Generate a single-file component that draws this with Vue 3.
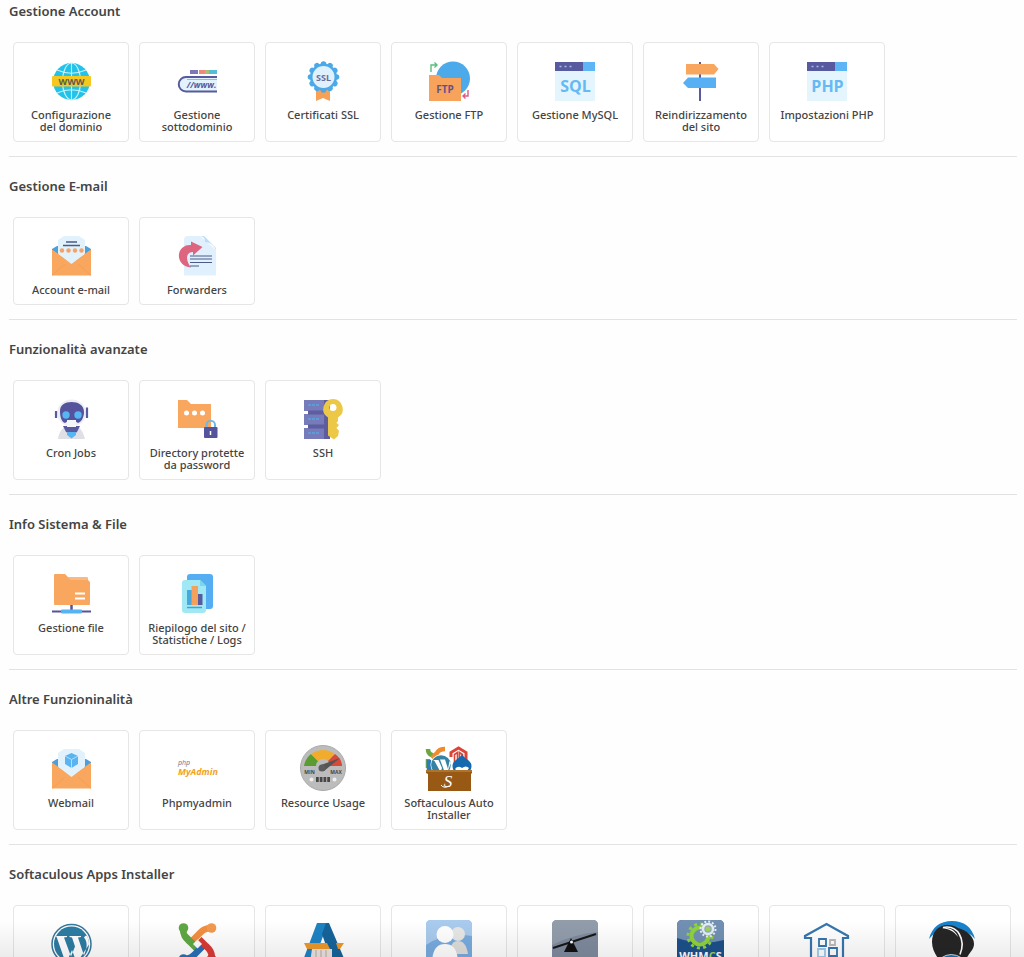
<script setup>
const sections = [
  {
    title: 'Gestione Account',
    tiles: [
      { icon: 'www', label: 'Configurazione\ndel dominio' },
      { icon: 'subdomain', label: 'Gestione\nsottodominio' },
      { icon: 'ssl', label: 'Certificati SSL' },
      { icon: 'ftp', label: 'Gestione FTP' },
      { icon: 'window', code: 'SQL', label: 'Gestione MySQL' },
      { icon: 'sign', label: 'Reindirizzamento\ndel sito' },
      { icon: 'window', code: 'PHP', label: 'Impostazioni PHP' }
    ]
  },
  {
    title: 'Gestione E-mail',
    tiles: [
      { icon: 'mail', label: 'Account e-mail' },
      { icon: 'forward', label: 'Forwarders' }
    ]
  },
  {
    title: 'Funzionalità avanzate',
    tiles: [
      { icon: 'robot', label: 'Cron Jobs' },
      { icon: 'lock', label: 'Directory protette\nda password' },
      { icon: 'key', label: 'SSH' }
    ]
  },
  {
    title: 'Info Sistema & File',
    tiles: [
      { icon: 'files', label: 'Gestione file' },
      { icon: 'report', label: 'Riepilogo del sito /\nStatistiche / Logs' }
    ]
  },
  {
    title: 'Altre Funzioninalità',
    tiles: [
      { icon: 'webmail', label: 'Webmail' },
      { icon: 'pma', label: 'Phpmyadmin' },
      { icon: 'gauge', label: 'Resource Usage' },
      { icon: 'softaculous', label: 'Softaculous Auto\nInstaller' }
    ]
  },
  {
    title: 'Softaculous Apps Installer',
    tiles: [
      { icon: 'wordpress', name: 'WordPress' },
      { icon: 'joomla', name: 'Joomla' },
      { icon: 'cart', name: 'AbanteCart' },
      { icon: 'people', name: 'Community' },
      { icon: 'seesaw', name: 'Seesaw' },
      { icon: 'whmcs', name: 'WHMCS' },
      { icon: 'house', name: 'House' },
      { icon: 'head', name: 'Headset' }
    ]
  }
]
const spikes = Array.from({ length: 12 }, (_, i) => i * 30)
</script>

<template>
  <main class="panel">
    <section v-for="s in sections" :key="s.title" class="section">
      <h2>{{ s.title }}</h2>
      <div class="tiles">
        <a v-for="t in s.tiles" :key="t.label || t.name" href="#" class="tile" :aria-label="t.label || t.name">
          <svg class="icon" viewBox="0 0 48 48" aria-hidden="true">
            <g v-if="t.icon === 'www'">
              <circle cx="24.500" cy="24.500" r="18.500" fill="#22c3ea" />
              <g fill="none" stroke="#c9f1fa" stroke-width="1.100">
                <ellipse cx="24.500" cy="24.500" rx="9" ry="18.500" />
                <path d="M24.500 6v37M10 13c9 4 20 4 29 0M10 36c9-4 20-4 29 0" />
              </g>
              <rect x="5" y="19" width="39" height="10.500" rx="1" fill="#f4c81e" />
              <text x="24.500" y="27.500" class="glyph" font-size="9" fill="#5a5a50">WWW</text>
            </g>

            <g v-else-if="t.icon === 'subdomain'">
              <rect x="17" y="13" width="8" height="4" fill="#7d78b5" />
              <rect x="26" y="13" width="6" height="4" fill="#ee8a77" />
              <rect x="32" y="13" width="4" height="4" fill="#a5c27c" />
              <rect x="36" y="13" width="8" height="4" fill="#56bcd8" />
              <path d="M44 20H13a7 7 0 0 0 0 14.500h31z" fill="#e2f3fd" />
              <path d="M44 20H13a7 7 0 0 0 0 14.500h31" fill="none" stroke="#575a9e" stroke-width="2" />
              <path d="M44 22.500H14" stroke="#9db6dc" fill="none" />
              <text x="28.500" y="30.500" class="glyph" font-size="8.500" font-style="italic" fill="#575a9e">//www.</text>
            </g>

            <g v-else-if="t.icon === 'ssl'">
              <path d="M17 30h14v14l-7-3-7 3z" fill="#f8a055" />
              <g fill="#4ba9e8">
                <circle cx="24.500" cy="20" r="13.500" />
                <circle v-for="a in spikes" :key="a" cx="24.500" cy="7" r="2.800" :transform="`rotate(${a} 24.500 20)`" />
              </g>
              <circle cx="24.500" cy="20" r="11" fill="#dff1fd" />
              <text x="24.500" y="23.500" class="glyph" font-size="9" fill="#6a6c9c">SSL</text>
            </g>

            <g v-else-if="t.icon === 'ftp'">
              <circle cx="28" cy="21.500" r="17" fill="#4ca9ea" />
              <path d="M4 18h10l3 3h19v23H4z" fill="#f8a35b" />
              <text x="20" y="36" class="glyph" font-size="10" fill="#66508a">FTP</text>
              <path d="M6 15V8h6M9.500 5.500 12 8l-2.500 2.500" fill="none" stroke="#58bf7d" stroke-width="1.400" />
              <path d="M43 33v6h-5M40.500 36.500 38 39l2.500 2.500" fill="none" stroke="#dc5a83" stroke-width="1.400" />
            </g>

            <g v-else-if="t.icon === 'window'">
              <path d="M4 14h40v30H4z" fill="#e4f5fe" />
              <path d="M4 5h28v9H4z" fill="#575a9e" />
              <path d="M32 5h12v9H32z" fill="#5db5f6" />
              <path d="M8.500 9.500h2M13.500 9.500h2M18.500 9.500h2" stroke="#a6bce6" stroke-width="1.600" />
              <text x="24.500" y="35" class="glyph" font-size="16" fill="#66b9f4">{{ t.code }}</text>
            </g>

            <g v-else-if="t.icon === 'sign'">
              <path d="M23 5v39" stroke="#575a9e" stroke-width="2" />
              <path d="M9 7h28l4.500 5-4.500 5.500H9z" fill="#f9a65f" />
              <path d="M39 20.500H11L6 26l5 5h28z" fill="#58b0f4" />
            </g>

            <g v-else-if="t.icon === 'mail' || t.icon === 'webmail'">
              <path d="M5 17l5-3h29l5 3v5H5z" fill="#4b9fdd" />
              <path d="M5 17.500 24.500 31 44 17.500V43.500H5z" fill="#f9a65f" />
              <path d="M11 8l6-4h15l6 4v13.500L24.500 32 11 21.500z" fill="#e1f2fc" />
              <path d="M5 43.500 18 32M44 43.500 31 32" stroke="#f2984e" stroke-width=".6" />
              <template v-if="t.icon === 'mail'">
                <path d="M19 10h11M16 13.500h17" stroke="#4c5b88" stroke-width="1.300" />
                <g fill="#f5a267">
                  <circle cx="15" cy="18.500" r="2.200" /><circle cx="21.500" cy="18.500" r="2.200" />
                  <circle cx="28" cy="18.500" r="2.200" /><circle cx="34.500" cy="18.500" r="2.200" />
                </g>
              </template>
              <template v-else>
                <path d="M24.500 8l6.500 3v8l-6.500 4-6.500-4v-8z" fill="#59b4f1" />
                <path d="M18 11l6.500 3.500L31 11M24.500 14.500V23" fill="none" stroke="#b2defa" />
              </template>
            </g>

            <g v-else-if="t.icon === 'forward'">
              <path d="M15 4h12l16 14v25.500H11V8q0-4 4-4z" fill="#e1f0fd" />
              <path d="M26 4c4 0 6 2 6 6 4 0 9 3 11 8V16L31 4z" fill="#bcdcf8" />
              <path d="M18 9.500 29.500 15 20 23.500V20c-7 0-8 8-2 15.500C9 35 5 28 6 22c1-6 6-9.500 12-9z" fill="#dd6580" />
              <path d="M17 24h22M17 27h22M17 30.500h22M17 34h9" stroke="#4c5b88" stroke-width="1.200" />
            </g>

            <g v-else-if="t.icon === 'robot'">
              <path d="M11 44c1-7 4-11 8-12h11c4 1 6 5 8 12z" fill="#dfe0e6" />
              <path d="M16 31h17l-3 6-5 3-6-3z" fill="#575a9e" />
              <path d="M20 37h9v3l-4.500 3.500L20 40z" fill="#55b6f3" />
              <ellipse cx="24.500" cy="18" rx="14.500" ry="13.500" fill="#eceef3" />
              <path d="M9 16v7M40 16v7M40 12.500V20" stroke="#575a9e" stroke-width="2.200" />
              <path d="M13 16c0-6 5-9 11.500-9S37 10 37 17c0 6-3 10-6 11l-3-2h-7l-3 2c-3-1-5-5-5-12z" fill="#55539b" />
              <path d="M20 25h9v7h-9z" fill="#f4f5f8" />
              <circle cx="19" cy="20" r="3.700" fill="#55b6f3" /><circle cx="31" cy="20" r="3.700" fill="#55b6f3" />
            </g>

            <g v-else-if="t.icon === 'lock'">
              <path d="M5 5h9l4 4h20v24H5z" fill="#f9a65f" />
              <g fill="#fff"><circle cx="13.500" cy="18" r="2.500" /><circle cx="21.500" cy="18" r="2.500" /><circle cx="29.500" cy="18" r="2.500" /></g>
              <path d="M33.500 33v-3a4.200 4.200 0 0 1 8.500 0v3" fill="none" stroke="#6cb8e6" stroke-width="2" />
              <rect x="31" y="32" width="13.500" height="11" rx="1" fill="#55539b" />
              <path d="M37.500 36v4" stroke="#fff" stroke-width="1.500" />
            </g>

            <g v-else-if="t.icon === 'key'">
              <path d="M5 5h26v11H5zM5 19h26v11H5zM5 33h26v11H5z" fill="#777bb9" />
              <path d="M9 15.500h22v4H9zM9 29.500h22v4H9zM25 5h6v39h-6z" fill="#5e5d9f" />
              <path d="M9 10h12M9 24h12M9 38h12" stroke="#5aa5df" stroke-width="1.600" stroke-dasharray="3 1" />
              <path fill-rule="evenodd" d="M34 4a10 10 0 0 1 5 18.500V26l-1.500 2 2.500 2-2.500 3 2.500 3-1 5-4 3.500-6-4V22.500A10 10 0 0 1 34 4zm0 5a3.500 3.500 0 1 0 0 7 3.500 3.500 0 0 0 0-7z" fill="#edc847" />
            </g>

            <g v-else-if="t.icon === 'files'">
              <path d="M7 5q0-1 1-1h10l3 3h19q1 0 1 3l2 2v22q0 1-1 1H8q-1 0-1-1z" fill="#f9a65f" />
              <path d="M20 7h20l1 3H24z" fill="#fbb883" />
              <path d="M28 23.500h10M28 28.500h10" stroke="#fff" stroke-width="2" />
              <path d="M24.500 35v5" stroke="#55539b" stroke-width="2.500" /><path d="M5 41.500h39" stroke="#55539b" stroke-width="2" />
              <rect x="14" y="39.500" width="21" height="4" rx="1" fill="#56b4f3" />
            </g>

            <g v-else-if="t.icon === 'report'">
              <rect x="14" y="4" width="26" height="35" rx="3" fill="#56aef2" />
              <path d="M9 13q0-3 3-3h15l6 6v24q0 3-3 3H12q-3 0-3-3z" fill="#a0e9f4" />
              <path d="M27 10l6 6h-6z" fill="#7fd3ee" />
              <path d="M14 20h5v15h-5z" fill="#45a9dc" /><path d="M24.500 24h5v11h-5z" fill="#575a9e" /><path d="M18.500 16H25v19h-6.500z" fill="#f3a15d" />
              <path d="M14 37.500h15" stroke="#45a0da" stroke-width="1.500" />
            </g>

            <g v-else-if="t.icon === 'pma'" class="pma">
              <text x="5" y="20" font-size="7" fill="#6e6f8e">php</text>
              <text x="5" y="30" font-size="9" font-weight="700" fill="#f3a11b">MyAdmin</text>
            </g>

            <g v-else-if="t.icon === 'gauge'">
              <circle cx="24" cy="23" r="22.500" fill="#bcbcbc" stroke="#a9a9a9" />
              <path d="M24 21H5A19 19 0 0 1 12 9z" fill="#5a9c31" />
              <path d="M24 21 12 9q12-8 24 0z" fill="#f2ac2d" />
              <path d="M24 21 36 9q7 5 7 12z" fill="#d84938" />
              <path d="M17 21a7 7 0 0 1 14 0z" fill="#bcbcbc" />
              <path d="M22 20 41 13 25 26z" fill="#555" /><circle cx="23" cy="23" r="3.500" fill="#5c5c5c" />
              <text x="10.500" y="28.500" class="glyph" font-size="5" fill="#444">MIN</text>
              <text x="37" y="28.500" class="glyph" font-size="5" fill="#444">MAX</text>
              <path d="M17 34.500h14" stroke="#474747" stroke-width="5" stroke-dasharray="2.750 1" />
              <circle cx="12.500" cy="34.500" r="2" fill="#eee" /><circle cx="35.500" cy="34.500" r="2" fill="#eee" />
            </g>

            <g v-else-if="t.icon === 'softaculous'">
              <g fill="none" stroke-width="4.500">
                <path d="M3 4q0 5 4 6l5 5M3 14v9" stroke="#67a83f" />
                <path d="M20 4q-6 0-8 4l-5 5" stroke="#ee8b2e" />
                <path d="M4 15v9h6" stroke="#2d7cba" />
                <path d="M26 12V7.500L33.500 3 41 7.500V16" stroke="#dc4437" stroke-width="3" />
              </g>
              <path d="M29.500 18V9.500l3-2v9h2v-9l3 2V18" fill="none" stroke="#dc4437" stroke-width="1.600" />
              <circle cx="16" cy="20" r="10.500" fill="#fff" /><circle cx="16" cy="20" r="9.800" fill="#3682a5" />
              <path d="M8 15h5.500l3.500 8-1.500 4L9.500 16zM15 14.500h5L23 24l1.500-8 1.500 2-4 10h-2z" fill="#fff" />
              <path d="M37 9c2 5 9.500 6 9.500 12 0 6-5 8-9.500 8s-9.500-2-9.500-8c0-6 7.500-7 9.500-12z" fill="#1469af" />
              <path d="M30 24q3-4 7-1 4-3 7 0l-2 3H32z" fill="#fff" />
              <path d="M1 25h46v3l-1 1v17H3V29l-2-1z" fill="#985915" /><path d="M1 25h46v2H1z" fill="#ad7430" />
              <text x="23" y="42" class="script" font-size="17" fill="#fff">S</text>
              <path d="M16 40q3 4 8 1" fill="none" stroke="#fff" />
            </g>

            <g v-else-if="t.icon === 'wordpress'">
              <circle cx="24.500" cy="24" r="19.500" fill="#fff" stroke="#37789c" stroke-width="1.500" />
              <circle cx="24.500" cy="24" r="17.500" fill="#2d7da4" />
              <path d="M9 16h11v1l-3 .5 7 19 4-10-3-9-2.500-.5v-1H34v1l-3 .5 6 18c4-10 3-14 0-18 3-5 5 1 5 7L31 41h-2l-4-11-5 11h-2L10 18z" fill="#fff" />
            </g>

            <g v-else-if="t.icon === 'joomla'" fill="none" stroke-width="6.500">
              <path d="M10 8c0 8 3 10 7 14l9 9" stroke="#5fa844" />
              <path d="M10 39c8 0 10-3 14-7l9-9" stroke="#2b70b8" />
              <path d="M39 39c0-8-3-10-7-14l-9-9" stroke="#db3b35" />
              <path d="M39 8c-8 0-10 3-14 7l-9 9" stroke="#fefefe" stroke-width="8" />
              <path d="M39 8c-8 0-10 3-14 7l-9 9" stroke="#f28f40" />
              <path d="M12 16l9 9" stroke="#5fa844" />
              <path d="M24.500 19.500l4.500 4.500-4.500 4.500-4.500-4.500z" fill="#fefefe" stroke="none" />
              <g stroke="none">
                <circle cx="10.500" cy="8" r="4.800" fill="#5fa844" /><circle cx="38.500" cy="8" r="4.800" fill="#f39a50" />
                <circle cx="10.500" cy="39" r="4.800" fill="#2b70b8" /><circle cx="38.500" cy="39" r="4.800" fill="#db3b35" />
              </g>
            </g>

            <g v-else-if="t.icon === 'cart'">
              <path d="M18 3h11L14 43H3z" fill="#1f83c5" />
              <path d="M27 3h3l17 40H33L23 14z" fill="#16649b" />
              <path d="M13 29h20v14H11z" fill="#ece3df" /><path d="M17 30v12M22 30v12M27 30v12" stroke="#bca9a4" />
              <path d="M5 23h23l3 6H8z" fill="#ee992b" /><path d="M37 23h8l-4 6h-2z" fill="#ee992b" />
            </g>

            <g v-else-if="t.icon === 'people'">
              <rect x="1" y="0" width="46" height="47" rx="5" fill="#79ace0" />
              <path d="M6 0h36q5 0 5 5v11Q20 12 1 25V5q0-5 5-5z" fill="#a9cbed" />
              <circle cx="33" cy="14" r="7" fill="#e7e7e5" /><path d="M25 34q0-13 8-13t10 13z" fill="#dededb" />
              <circle cx="20" cy="14.500" r="8.500" fill="#fff" /><path d="M7 44q0-20 13-20t13 20z" fill="#fff" />
            </g>

            <g v-else-if="t.icon === 'seesaw'">
              <rect x="1" y="0" width="46" height="47" rx="5" fill="#7f8c9e" />
              <path d="M6 0h36q5 0 5 5v7Q23 14 1 25V5q0-5 5-5z" fill="#929dac" />
              <path d="M2 28 45 14" stroke="#171717" stroke-width="2" /><path d="M20 18l7 14H13z" fill="#111" />
              <circle cx="20.500" cy="22" r="1.500" fill="#fff" />
            </g>

            <g v-else-if="t.icon === 'whmcs'">
              <rect x="0" y="0" width="47" height="47" rx="5" fill="#1d518c" />
              <path d="M5 0h37q5 0 5 5v15q-23 6-47-2V5q0-5 5-5z" fill="#7190b3" />
              <g fill="none">
                <circle cx="23" cy="16" r="8.500" stroke="#8fd43b" stroke-width="4" />
                <circle cx="23" cy="16" r="12" stroke="#8fd43b" stroke-width="3" stroke-dasharray="3 3.280" />
                <circle cx="31" cy="9" r="5" fill="#91a9c3" stroke="#e6edf3" stroke-width="2.500" />
                <circle cx="31" cy="9" r="7.500" stroke="#e6edf3" stroke-width="2" stroke-dasharray="2 1.920" />
              </g>
              <circle cx="31" cy="9" r="2.500" fill="#9bd45a" />
              <text x="23.500" y="40" class="glyph" font-size="11" fill="#fff">WHM<tspan fill="#9bd45a">C</tspan>S</text>
            </g>

            <g v-else-if="t.icon === 'house'" fill="none">
              <path d="M8 47V18H2v-2L23.500 4 45 16v2h-5v29" stroke="#3676b0" stroke-width="2.200" />
              <g stroke-width="1.800">
                <path d="M16 19h7v7h-7z" stroke="#3676b0" /><path d="M27 20h5v5h-5z" stroke="#bbb" />
                <path d="M15 29h7v8h-7z" stroke="#9ccbea" /><path d="M26 28h8v8h-8z" stroke="#3676b0" />
              </g>
            </g>

            <g v-else>
              <path d="M0 19C3 7 11 1 23 1s20 6 23 18q-8-10-23-10T0 19z" fill="#1883cc" />
              <path d="M3 22C3 12 9 5 19 5c4 0 7 1 10 3 8 2 16 8 16 16 0 5-4 8-6 12l-8 8H13c-3-5-10-12-10-22z" fill="#262626" />
              <path d="M14 7.500c15-3 23 12 17 27" fill="none" stroke="#fff" stroke-width="1.600" />
              <path d="M13 8c8-1 14 3 16 9-4-6-9-8-16-9z" fill="#fff" />
              <path d="M12 38q10-7 21 0v10H12z" fill="#1b73b6" stroke="#fff" stroke-width=".8" />
            </g>
          </svg>
          <span v-if="t.label" class="label">{{ t.label }}</span>
        </a>
      </div>
    </section>
    <div class="fade"></div>
  </main>
</template>

<style>
body { background: #fefefe; }
</style>

<style scoped>
.panel {
  box-sizing: border-box;
  height: 100vh;
  overflow: hidden;
  padding: 0 7px 0 9px;
  font-family: "Noto Sans", "Open Sans", sans-serif;
  color: #444;
}
.section {
  padding: 20px 0 14px;
  border-top: 1px solid #e2e2e2;
}
.section:first-child {
  padding-top: 2px;
  border-top: 0;
}
h2 {
  margin: 0 0 22px;
  font-size: 13px;
  line-height: 18px;
  font-weight: 600;
}
.tiles {
  display: flex;
  flex-wrap: wrap;
  gap: 10px;
  padding-left: 4px;
}
.tile {
  box-sizing: border-box;
  width: 116px;
  min-height: 88px;
  padding: 14px 7px 8px;
  border: 1px solid #e6e6e6;
  border-radius: 4px;
  background: #fff;
  color: #444;
  text-align: center;
  text-decoration: none;
}
.section:last-of-type .tile { min-height: 100px; }
.icon {
  display: block;
  width: 48px;
  height: 48px;
  margin: 0 auto 4px;
}
.label {
  display: block;
  font-size: 11px;
  line-height: 12px;
  font-weight: 500;
  white-space: pre-line;
}
.glyph {
  font-family: "Open Sans", sans-serif;
  font-weight: 700;
  text-anchor: middle;
}
.script {
  font-family: "Liberation Serif", serif;
  font-style: italic;
  text-anchor: middle;
}
.pma { font-family: "Open Sans", sans-serif; font-style: italic; }
.fade {
  position: fixed;
  left: 0;
  right: 0;
  bottom: 0;
  height: 36px;
  background: linear-gradient(rgba(0, 0, 0, 0), rgba(0, 0, 0, 0.07));
  pointer-events: none;
}
</style>
